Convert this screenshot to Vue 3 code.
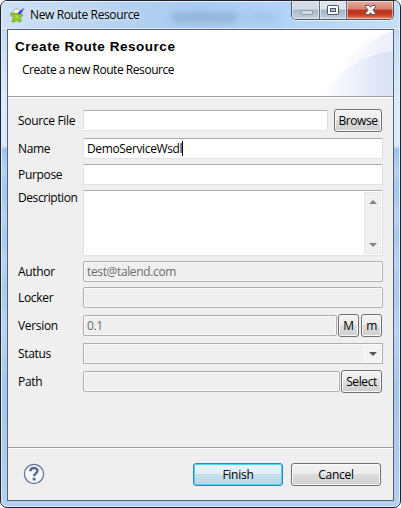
<script setup>
import { ref } from 'vue'

const form = ref({
  name: 'DemoServiceWsdl',
  author: 'test@talend.com',
  version: '0.1',
})
</script>

<template>
  <div class="window">
    <header class="titlebar">
      <i class="smudge s1"></i><i class="smudge s2"></i>
      <svg class="app-icon" width="15" height="15" viewBox="0 0 15 15">
        <path d="M3.5 4.5V2.5L5.5 1H8L9.5 3 8.5 5.5H4.5Z" fill="#fafaf6" stroke="#a8a89a" stroke-width=".9" />
        <path d="M1 4.8L4.5 5.8 7 5 9 6.2 12.5 6.2 12.5 8 10 9.5 11.5 13 9.5 14 6.5 12.3 3 14.5 1.8 13 3.5 9.8 .6 7Z" fill="#94ca22" stroke="#6fa31e" stroke-width=".8" />
        <path d="M5 7.5L9 8 7.5 10.5Z" fill="#b9e445" />
        <path d="M8.8 6L12.2 2.2" stroke="#4038e0" stroke-width="2.3" />
        <path d="M12 2.4L13.8 .6" stroke="#7d70ef" stroke-width="1.7" />
      </svg>
      <span class="title">New Route Resource</span>
      <div class="controls">
        <span class="ctl min">
          <svg width="28" height="19" viewBox="0 0 28 19"><rect x="9.5" y="9.5" width="11" height="4" rx=".7" fill="#d6dce4" stroke="#8d98a8" /></svg>
        </span>
        <span class="ctl max">
          <svg width="26" height="19" viewBox="0 0 26 19"><rect x="7.5" y="4.5" width="11" height="9" rx=".7" fill="#fff" stroke="#4d5467" /><rect x="10.5" y="7.5" width="5" height="3" fill="#a9bed6" stroke="#4d5467" /></svg>
        </span>
        <span class="ctl close">
          <svg width="46" height="19" viewBox="0 0 46 19"><path d="M18.5 4.5H22L23.5 6.3 25 4.5H28.5V5.8L25.8 9 28.5 12.2V13.5H25L23.5 11.7 22 13.5H18.5V12.2L21.2 9 18.5 5.8Z" fill="#fff" stroke="#5a5566" /></svg>
        </span>
      </div>
    </header>

    <main class="client">
      <section class="banner">
        <svg class="swoosh" width="75" height="66" viewBox="0 0 75 66">
          <defs>
            <linearGradient id="outer" gradientUnits="userSpaceOnUse" x1="10" y1="0" x2="75" y2="0"><stop offset="0" stop-color="#fff" /><stop offset="1" stop-color="#e8edf9" /></linearGradient>
            <linearGradient id="inner" gradientUnits="userSpaceOnUse" x1="4" y1="0" x2="66" y2="0"><stop offset="0" stop-color="#fff" /><stop offset="1" stop-color="#dde4f6" /></linearGradient>
          </defs>
          <path d="M4 66Q29 14 75 1V66Z" fill="url(#outer)" opacity=".6" />
          <path d="M37 35Q52 10 75 1V66H35Z" fill="url(#outer)" opacity=".8" />
          <path d="M4 66Q31 26 75 21V66Z" fill="url(#inner)" />
        </svg>
        <h1>Create Route Resource</h1>
        <p>Create a new Route Resource</p>
      </section>

      <section class="form">
        <div class="row tall">
          <label>Source File</label>
          <div class="field source"></div>
          <button class="btn browse">Browse</button>
        </div>
        <div class="row name">
          <label>Name</label>
          <div class="field"><span class="val">{{ form.name }}</span><i class="caret"></i></div>
        </div>
        <div class="row">
          <label>Purpose</label>
          <div class="field"></div>
        </div>
        <div class="row area">
          <label class="tight">Description</label>
          <div class="field">
            <div class="scroll">
              <svg width="8" height="4" viewBox="0 0 8 4"><path d="M0 4L4 0 8 4Z" fill="#858585" /></svg>
              <svg width="8" height="4" viewBox="0 0 8 4"><path d="M0 0L4 4 8 0Z" fill="#858585" /></svg>
            </div>
          </div>
        </div>
        <div class="row">
          <label>Author</label>
          <div class="field off"><span class="val author">{{ form.author }}</span></div>
        </div>
        <div class="row">
          <label>Locker</label>
          <div class="field off"></div>
        </div>
        <div class="row tall">
          <label>Version</label>
          <div class="field off version"><span class="val">{{ form.version }}</span></div>
          <button class="btn letter">M</button>
          <button class="btn letter last">m</button>
        </div>
        <div class="row status">
          <label>Status</label>
          <div class="field off combo">
            <span class="drop"><svg width="8" height="4" viewBox="0 0 8 4"><path d="M0 0L4 4 8 0Z" fill="#555" /></svg></span>
          </div>
        </div>
        <div class="row tall">
          <label>Path</label>
          <div class="field off path"></div>
          <button class="btn select">Select</button>
        </div>
      </section>

      <footer class="footer">
        <span class="help">
          <svg width="22" height="22" viewBox="0 0 22 22">
            <circle cx="11" cy="11" r="9.6" fill="#f5f6f8" stroke="#5f7293" stroke-width="1.2" />
            <path d="M7.4 8.2C7.4 3.9 14.5 4 14.5 7.8 14.5 10.3 11.1 10.2 11.1 13.3" fill="none" stroke="#5a6c8f" stroke-width="2.5" />
            <rect x="9.7" y="14.8" width="2.9" height="2.8" rx=".8" fill="#5a6c8f" />
          </svg>
        </span>
        <button class="btn wide primary">Finish</button>
        <button class="btn wide">Cancel</button>
      </footer>
    </main>
  </div>
</template>

<style>
body {
  margin: 0;
  background: #fff;
  overflow: hidden;
}
</style>

<style scoped>
* {
  box-sizing: border-box;
}
.window {
  position: relative;
  width: 401px;
  height: 508px;
  padding: 0 6px 6px;
  border: 1px solid #20242c;
  border-radius: 7px;
  overflow: hidden;
  background:
    linear-gradient(90deg, #ecf5ff 0 1px, transparent 1px 398px, #e4f1ff 398px),
    linear-gradient(180deg, #b9d5f3 0 20px, #c9dff6 40px, #dceafb 105px, #d9e8fa 145px, #9dc2ec 148px, #b4d3f5 170px, #a2c6ed 190px, #b6d4f5 215px, #a8caef 235px, #b6d4f5 260px, #aacbef 285px, #b6d4f5 330px, #a5c6ec 390px, #b3d0f0 500px);
  box-shadow: inset 0 0 0 1px #e0eefc;
  font: 12px/16px "Open Sans", "Noto Sans", sans-serif;
  color: #000;
}
.titlebar {
  position: relative;
  display: flex;
  height: 28px;
  margin: 0 -5px;
  padding: 0 5px 0 8px;
  background: linear-gradient(90deg, #cfe1f5, #b4d1f0 30%, #a9cdf3 50%, #b4d5f8 75%, #c4def8);
  box-shadow: inset 0 1px #e3effc, inset 0 -1px #deebfa;
}
.smudge {
  position: absolute;
  height: 7px;
  top: 13px;
  background: #526c8c;
  filter: blur(4px);
  opacity: .38;
}
.s1 { left: 170px; width: 66px; }
.s2 { left: 246px; width: 32px; opacity: .15; }
.app-icon {
  margin-top: 7px;
  position: relative;
}
.title {
  position: relative;
  margin: 6px 0 0 5px;
  letter-spacing: -.37px;
  white-space: nowrap;
  text-shadow: 0 0 6px #fff;
}
.controls {
  position: relative;
  display: flex;
  width: 103px;
  height: 19px;
  margin-left: auto;
  border: 1px solid #50545f;
  border-top: 0;
  border-radius: 0 0 5px 5px;
  overflow: hidden;
  box-shadow: 0 1px #e9f3fd;
}
.ctl {
  height: 18px;
  box-shadow: inset 0 0 0 1px #ffffff80;
}
.ctl svg { display: block; }
.min, .max { border-right: 1px solid #626c7c; }
.min { width: 28px; background: linear-gradient(#d3dbe5 0 45%, #a9b7c8 50%, #c2d0df); }
.max { width: 27px; background: linear-gradient(#dce4ed 0 45%, #a2b2c6 50%, #c2d2e3); }
.close { width: 46px; background: linear-gradient(#e6aa9d 0, #d58373 45%, #b9341f 50%, #c73c22 75%, #df8467); }

.client {
  display: flex;
  flex-direction: column;
  width: 387px;
  height: 472px;
  border: 1px solid #59616e;
  background: #efefef;
}
.banner {
  position: relative;
  flex: none;
  height: 67px;
  border-bottom: 1px solid #9d9d9d;
  background: #fff;
  box-shadow: 0 1px #fff;
}
.swoosh {
  position: absolute;
  right: 0;
  top: 0;
}
h1 {
  margin: 0;
  padding: 9px 0 0 7px;
  font: bold 13.5px/16px "Liberation Sans", sans-serif;
  letter-spacing: .53px;
}
p {
  margin: 7px 0 0 14px;
  letter-spacing: -.45px;
  line-height: 16px;
}
.form {
  display: flex;
  flex-direction: column;
  gap: 5px;
  padding: 12px 10px 0;
  flex: 1;
}
.row {
  display: flex;
  align-items: center;
  height: 21px;
  width: 365px;
}
.tall { height: 23px; }
.name { margin-top: 1px; }
.tall ~ .tall { margin-top: 1px; }
.status { margin-top: 1px; }
label {
  flex: none;
  width: 65px;
  letter-spacing: -.32px;
  white-space: nowrap;
}
.tight { letter-spacing: -.42px; }
.field {
  flex: 1;
  display: flex;
  align-items: center;
  height: 21px;
  padding-left: 3px;
  border: 1px solid #e2e3ea;
  border-top-color: #abadb3;
  border-right-color: #dbdfe6;
  border-radius: 1px;
  background: #fff;
}
.off {
  border-color: #afafaf;
  border-radius: 2px;
  background: #efefef;
  box-shadow: inset 0 0 0 1px #fafafa;
  color: #6d6d6d;
}
.val { letter-spacing: -.36px; }
.caret {
  width: 1px;
  height: 15px;
  background: #000;
}
.source { flex: none; width: 245px; margin-right: 6px; }
.version { flex: none; width: 254px; margin-right: 1px; }
.path { flex: none; width: 257px; margin-right: 1px; }
.area {
  height: 66px;
  align-items: stretch;
}
.area .field {
  height: 66px;
  align-items: stretch;
  justify-content: flex-end;
  padding: 1px;
}
.scroll {
  display: flex;
  flex-direction: column;
  justify-content: space-between;
  align-items: center;
  width: 17px;
  padding: 7px 0 6px;
  background: #f0f0f0;
  border: 1px solid #e9e9e9;
}
.combo {
  justify-content: flex-end;
  padding: 1px;
  border-radius: 0;
}
.drop {
  display: flex;
  align-items: center;
  justify-content: center;
  width: 17px;
  height: 17px;
  border-left: 1px solid #fafafa;
  background: #f3f3f3;
}
.btn {
  display: flex;
  align-items: center;
  justify-content: center;
  flex: none;
  height: 23px;
  padding: 0;
  border: 1px solid #707070;
  border-radius: 3px;
  background: linear-gradient(#f3f3f3, #ebebeb 48%, #dddddd 50%, #cfcfcf);
  box-shadow: inset 0 0 0 1px #fafafa;
  font: inherit;
  color: #000;
  letter-spacing: -.4px;
}
.browse { width: 48px; }
.letter { width: 21px; }
.last { margin-left: 2px; }
.select { width: 41px; }
.footer {
  display: flex;
  flex: none;
  height: 53px;
  padding: 15px 12px 0 15px;
  border-top: 1px solid #9d9d9d;
  box-shadow: inset 0 1px #fff;
}
.help {
  flex: 1;
  height: 22px;
}
.wide {
  width: 90px;
  margin-left: 8px;
  letter-spacing: -.25px;
}
.primary {
  border-color: #3c7fb1;
  background: linear-gradient(#eaf6fb, #dceff7 48%, #c5e1ed 50%, #b5d7e6);
  box-shadow: inset 0 0 0 1px #45d8fb;
}
</style>
